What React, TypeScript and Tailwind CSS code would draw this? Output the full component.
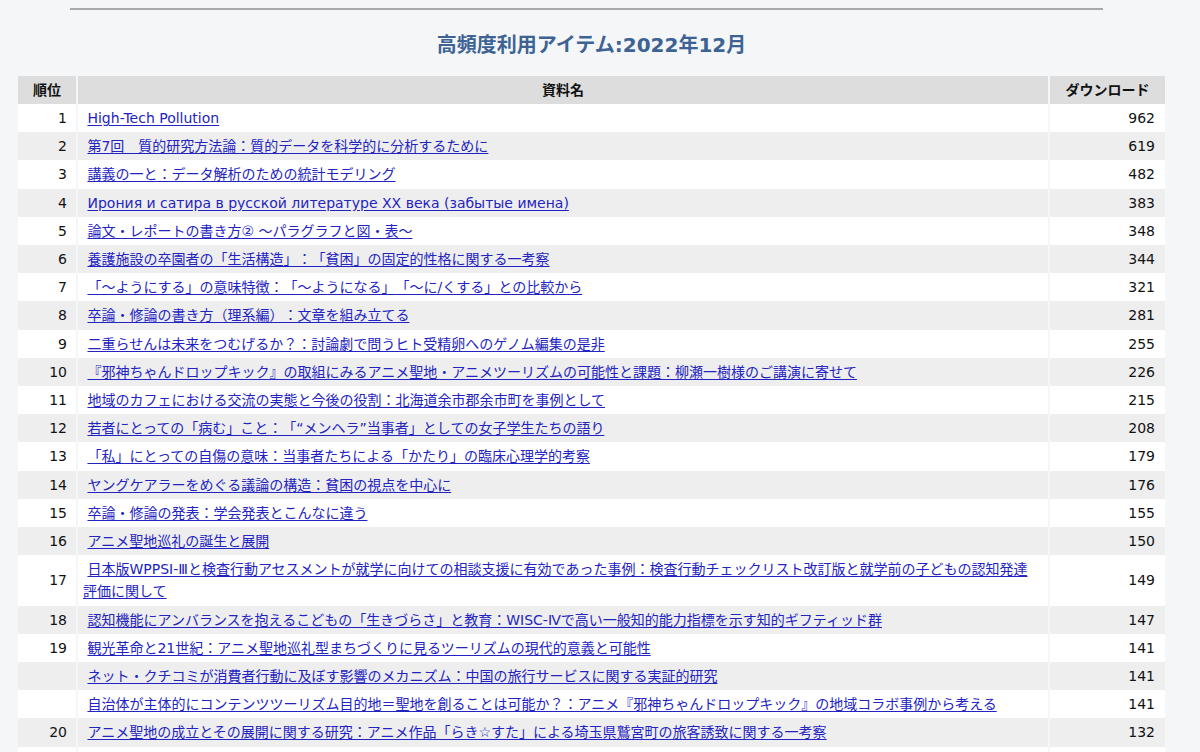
import React from "react";

type Row = { rank: string; title: React.ReactNode; dl: number };

const rows: Row[] = [
  { rank: "1", title: "High-Tech Pollution", dl: 962 },
  { rank: "2", title: "第7回　質的研究方法論：質的データを科学的に分析するために", dl: 619 },
  { rank: "3", title: "講義の一と：データ解析のための統計モデリング", dl: 482 },
  { rank: "4", title: "Ирония и сатира в русской литературе XX века (забытые имена)", dl: 383 },
  { rank: "5", title: "論文・レポートの書き方② ～パラグラフと図・表～", dl: 348 },
  { rank: "6", title: "養護施設の卒園者の「生活構造」：「貧困」の固定的性格に関する一考察", dl: 344 },
  { rank: "7", title: "「～ようにする」の意味特徴：「～ようになる」「～に/くする」との比較から", dl: 321 },
  { rank: "8", title: "卒論・修論の書き方（理系編）：文章を組み立てる", dl: 281 },
  { rank: "9", title: "二重らせんは未来をつむげるか？：討論劇で問うヒト受精卵へのゲノム編集の是非", dl: 255 },
  { rank: "10", title: "『邪神ちゃんドロップキック』の取組にみるアニメ聖地・アニメツーリズムの可能性と課題：柳瀬一樹様のご講演に寄せて", dl: 226 },
  { rank: "11", title: "地域のカフェにおける交流の実態と今後の役割：北海道余市郡余市町を事例として", dl: 215 },
  { rank: "12", title: "若者にとっての「病む」こと：「“メンヘラ”当事者」としての女子学生たちの語り", dl: 208 },
  { rank: "13", title: "「私」にとっての自傷の意味：当事者たちによる「かたり」の臨床心理学的考察", dl: 179 },
  { rank: "14", title: "ヤングケアラーをめぐる議論の構造：貧困の視点を中心に", dl: 176 },
  { rank: "15", title: "卒論・修論の発表：学会発表とこんなに違う", dl: 155 },
  { rank: "16", title: "アニメ聖地巡礼の誕生と展開", dl: 150 },
  {
    rank: "17",
    title: (
      <>
        日本版WPPSI-Ⅲと検査行動アセスメントが就学に向けての相談支援に有効であった事例：検査行動チェックリスト改訂版と就学前の子どもの認知発達
        <br />
        評価に関して
      </>
    ),
    dl: 149,
  },
  { rank: "18", title: "認知機能にアンバランスを抱えるこどもの「生きづらさ」と教育：WISC-Ⅳで高い一般知的能力指標を示す知的ギフティッド群", dl: 147 },
  { rank: "19", title: "観光革命と21世紀：アニメ聖地巡礼型まちづくりに見るツーリズムの現代的意義と可能性", dl: 141 },
  { rank: "", title: "ネット・クチコミが消費者行動に及ぼす影響のメカニズム：中国の旅行サービスに関する実証的研究", dl: 141 },
  { rank: "", title: "自治体が主体的にコンテンツツーリズム目的地＝聖地を創ることは可能か？：アニメ『邪神ちゃんドロップキック』の地域コラボ事例から考える", dl: 141 },
  { rank: "20", title: "アニメ聖地の成立とその展開に関する研究：アニメ作品「らき☆すた」による埼玉県鷲宮町の旅客誘致に関する一考察", dl: 132 },
  { rank: "21", title: "コンテンツツーリズムにおける地域の役割", dl: 128 },
];

export default function App() {
  return (
    <div
      className="min-h-screen bg-[#f5f6f8] text-[14px] text-[#111] [text-spacing-trim:space-all]"
      style={{ fontFamily: '"DejaVu Sans", "Noto Sans CJK JP", sans-serif' }}
    >
      <div className="ml-[18px] w-[1147px] pt-[8px]">
        <div className="ml-[52px] h-[2px] w-[1033px] bg-[#a9a9ab]" />
        <h2 className="mt-[21px] text-center text-[20px] leading-[28px] font-bold text-[#3c6394]">
          高頻度利用アイテム:2022年12月
        </h2>
        <table
          className="mt-[17px] -mx-[2px] table-fixed border-separate border-spacing-x-[2px] border-spacing-y-0"
          style={{ width: 1151 }}
        >
          <colgroup>
            <col style={{ width: 58 }} />
            <col />
            <col style={{ width: 115 }} />
          </colgroup>
          <thead>
            <tr className="bg-[#dddddd]">
              <th className="h-[28px] text-center font-bold leading-[22px]">順位</th>
              <th className="h-[28px] text-center font-bold leading-[22px]">資料名</th>
              <th className="h-[28px] text-center font-bold leading-[22px]">ダウンロード</th>
            </tr>
          </thead>
          <tbody>
            {rows.map((r, i) => (
              <tr key={i} className={i % 2 === 0 ? "bg-white" : "bg-[#eeeeee]"}>
                <td className="py-[3px] pr-[9px] text-right align-middle leading-[22.2px]">{r.rank}</td>
                <td className="py-[3px] pl-[5px] align-middle leading-[22.2px]">
                  {"\u00a0"}
                  <a href="#" className="text-[#2323c2] underline underline-offset-[2px]">
                    {r.title}
                  </a>
                </td>
                <td className="py-[3px] pr-[10px] text-right align-middle leading-[22.2px]">{r.dl}</td>
              </tr>
            ))}
          </tbody>
        </table>
      </div>
    </div>
  );
}
